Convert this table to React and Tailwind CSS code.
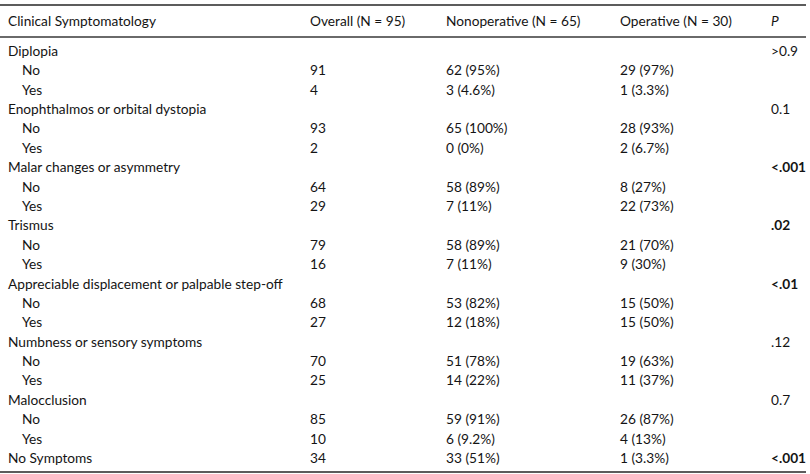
const ROWS = [
  { label: 'Diplopia', p: '>0.9' },
  { label: 'No', sub: true, overall: '91', non: '62 (95%)', op: '29 (97%)' },
  { label: 'Yes', sub: true, overall: '4', non: '3 (4.6%)', op: '1 (3.3%)' },
  { label: 'Enophthalmos or orbital dystopia', p: '0.1' },
  { label: 'No', sub: true, overall: '93', non: '65 (100%)', op: '28 (93%)' },
  { label: 'Yes', sub: true, overall: '2', non: '0 (0%)', op: '2 (6.7%)' },
  { label: 'Malar changes or asymmetry', p: '<.001', bold: true },
  { label: 'No', sub: true, overall: '64', non: '58 (89%)', op: '8 (27%)' },
  { label: 'Yes', sub: true, overall: '29', non: '7 (11%)', op: '22 (73%)' },
  { label: 'Trismus', p: '.02', bold: true },
  { label: 'No', sub: true, overall: '79', non: '58 (89%)', op: '21 (70%)' },
  { label: 'Yes', sub: true, overall: '16', non: '7 (11%)', op: '9 (30%)' },
  { label: 'Appreciable displacement or palpable step-off', p: '<.01', bold: true },
  { label: 'No', sub: true, overall: '68', non: '53 (82%)', op: '15 (50%)' },
  { label: 'Yes', sub: true, overall: '27', non: '12 (18%)', op: '15 (50%)' },
  { label: 'Numbness or sensory symptoms', p: '.12' },
  { label: 'No', sub: true, overall: '70', non: '51 (78%)', op: '19 (63%)' },
  { label: 'Yes', sub: true, overall: '25', non: '14 (22%)', op: '11 (37%)' },
  { label: 'Malocclusion', p: '0.7' },
  { label: 'No', sub: true, overall: '85', non: '59 (91%)', op: '26 (87%)' },
  { label: 'Yes', sub: true, overall: '10', non: '6 (9.2%)', op: '4 (13%)' },
  { label: 'No Symptoms', overall: '34', non: '33 (51%)', op: '1 (3.3%)', p: '<.001', bold: true },
];

const COLS = 'grid grid-cols-[302px_136px_174px_151px_1fr] pl-2';

export default function App() {
  return (
    <div className="w-[810px] h-[474px] bg-white pt-1 text-[13.7px] text-[#141414]" style={{ fontFamily: 'Lato, "Open Sans", sans-serif' }}>
      <div className="w-[806px] border-t-2 border-b-2 border-[#5c5c5c]">
        <div className={`${COLS} h-[32px] items-center border-b-2 border-[#6a6a6a]`}>
          <div>Clinical Symptomatology</div>
          <div>Overall (N = 95)</div>
          <div>Nonoperative (N = 65)</div>
          <div>Operative (N = 30)</div>
          <div className="italic">P</div>
        </div>
        <div className="py-[3px]">
          {ROWS.map((r, i) => (
            <div key={i} className={`${COLS} h-[19.4px] items-center leading-none`}>
              <div className={r.sub ? 'pl-[14px]' : ''}>{r.label}</div>
              <div>{r.overall}</div>
              <div>{r.non}</div>
              <div>{r.op}</div>
              <div className={r.bold ? 'font-bold' : ''}>{r.p}</div>
            </div>
          ))}
        </div>
      </div>
    </div>
  );
}
